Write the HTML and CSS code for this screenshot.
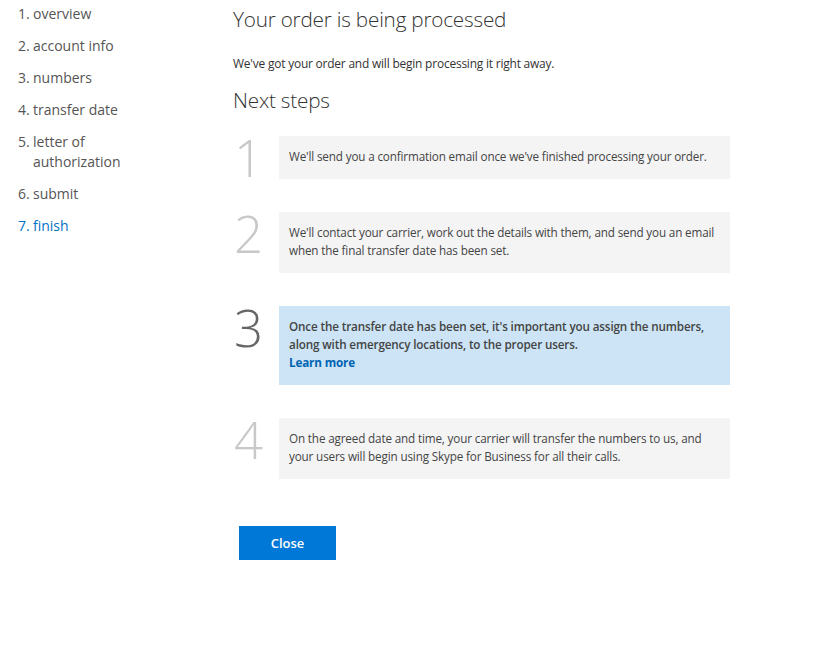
FILE: index.html
```html
<!DOCTYPE html>
<html>
<head>
<meta charset="utf-8">
<link rel="stylesheet" href="styles.css">
</head>
<body>
<div class="page">
  <nav class="nav">
    <div class="nav-item"><span class="n">1.</span><span>overview</span></div>
    <div class="nav-item"><span class="n">2.</span><span>account info</span></div>
    <div class="nav-item"><span class="n">3.</span><span>numbers</span></div>
    <div class="nav-item"><span class="n">4.</span><span>transfer date</span></div>
    <div class="nav-item"><span class="n">5.</span><span>letter of<br>authorization</span></div>
    <div class="nav-item"><span class="n">6.</span><span>submit</span></div>
    <div class="nav-item active"><span class="n">7.</span><span>finish</span></div>
  </nav>
  <main class="main">
    <h1 class="title">Your order is being processed</h1>
    <p class="intro">We've got your order and will begin processing it right away.</p>
    <h2 class="subtitle">Next steps</h2>
    <div class="steps">
      <div class="step">
        <div class="num">1</div>
        <div class="box">We'll send you a confirmation email once we've finished processing your order.</div>
      </div>
      <div class="step">
        <div class="num">2</div>
        <div class="box">We'll contact your carrier, work out the details with them, and send you an email when the final transfer date has been set.</div>
      </div>
      <div class="step current">
        <div class="num">3</div>
        <div class="box">Once the transfer date has been set, it's important you assign the numbers, along with emergency locations, to the proper users.<br><a class="link" href="#">Learn more</a></div>
      </div>
      <div class="step">
        <div class="num">4</div>
        <div class="box">On the agreed date and time, your carrier will transfer the numbers to us, and your users will begin using Skype for Business for all their calls.</div>
      </div>
    </div>
    <button class="close">Close</button>
  </main>
</div>
</body>
</html>
```
FILE: styles.css
```css
html, body {
  margin: 0;
  padding: 0;
  background: #fff;
}
body {
  font-family: "Open Sans", "Noto Sans", sans-serif;
  color: #444;
}
.page {
  display: flex;
  padding: 4px 0 0 18px;
}
.nav {
  width: 215px;
  display: flex;
  flex-direction: column;
  gap: 12px;
}
.nav-item {
  display: flex;
  font-size: 14px;
  line-height: 20px;
  color: #555;
}
.nav-item .n {
  width: 15px;
  flex: none;
}
.nav-item.active {
  color: #0072c6;
}
.main {
  width: 497px;
  display: flex;
  flex-direction: column;
}
.title {
  font-size: 20.7px;
  font-weight: 300;
  line-height: 30px;
  margin: 0;
  color: #333;
  letter-spacing: -0.2px;
}
.intro {
  font-size: 11.95px;
  line-height: 18px;
  margin: 21px 0 0;
  color: #333;
  letter-spacing: -0.2px;
}
.subtitle {
  font-size: 20.7px;
  font-weight: 300;
  line-height: 30px;
  margin: 12px 0 0;
  color: #333;
  letter-spacing: -0.2px;
}
.steps {
  display: flex;
  flex-direction: column;
  gap: 33px;
  margin-top: 21px;
}
.step {
  display: flex;
  align-items: flex-start;
}
.num {
  width: 46px;
  flex: none;
  font-size: 51px;
  font-weight: 300;
  line-height: 44px;
  height: 40px;
  color: #c8c8c8;
  padding-left: 1px;
  box-sizing: border-box;
  margin-top: -1px;
}
.step.current .num {
  color: #666;
}
.box {
  flex: 1;
  background: #f4f4f4;
  padding: 11px 10px 14px;
  font-size: 11.7px;
  line-height: 18px;
  color: #444;
  letter-spacing: -0.15px;
}
.step.current .box {
  background: #cce4f6;
  font-weight: 600;
}
.link {
  color: #0063b1;
  text-decoration: none;
  font-weight: 700;
}
.close {
  align-self: flex-start;
  margin: 47px 0 0 6px;
  width: 97px;
  height: 34px;
  background: #0078d7;
  color: #fff;
  border: none;
  font-family: inherit;
  font-size: 13px;
  font-weight: 600;
  padding: 0;
}
```
